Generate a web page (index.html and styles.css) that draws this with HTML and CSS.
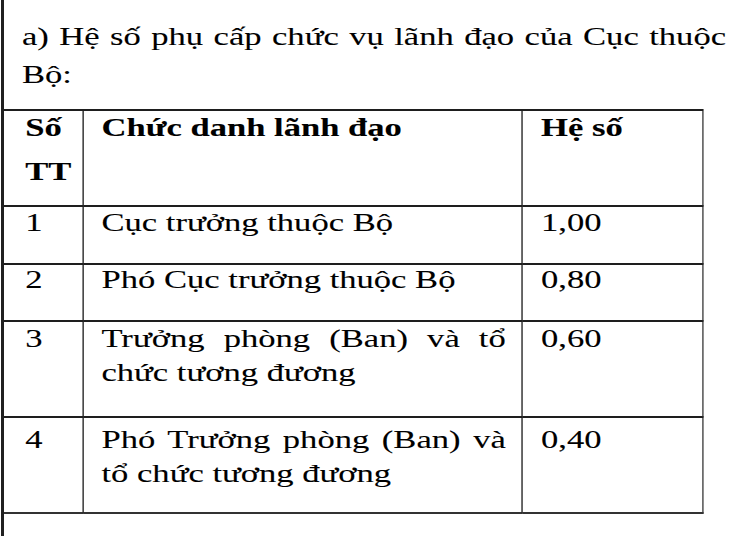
FILE: index.html
```html
<!DOCTYPE html>
<html lang="vi">
<head>
<meta charset="utf-8">
<link rel="stylesheet" href="styles.css">
</head>
<body>
<div class="frame">
  <div class="sheet">
    <p class="intro">a) Hệ số phụ cấp chức vụ lãnh đạo của Cục thuộc Bộ:</p>
    <div class="grid">
      <div class="cell head c1"><span class="ln">Số</span><span class="ln tt">TT</span></div>
      <div class="cell head c2">Chức danh lãnh đạo</div>
      <div class="cell head c3">Hệ số</div>

      <div class="cell r1 c1">1</div>
      <div class="cell r1 c2">Cục trưởng thuộc Bộ</div>
      <div class="cell r1 c3">1,00</div>

      <div class="cell r2 c1">2</div>
      <div class="cell r2 c2">Phó Cục trưởng thuộc Bộ</div>
      <div class="cell r2 c3">0,80</div>

      <div class="cell r3 c1">3</div>
      <div class="cell r3 c2">Trưởng phòng (Ban) và tổ chức tương đương</div>
      <div class="cell r3 c3">0,60</div>

      <div class="cell r4 c1">4</div>
      <div class="cell r4 c2">Phó Trưởng phòng (Ban) và tổ chức tương đương</div>
      <div class="cell r4 c3">0,40</div>
    </div>
  </div>
</div>
</body>
</html>
```
FILE: styles.css
```css
html, body {
  margin: 0;
  padding: 0;
  background: #fff;
}
.frame {
  margin-left: 1px;
  border-left: 3px solid #202020;
  height: 536px;
  box-sizing: border-box;
  overflow: hidden;
}
.sheet {
  width: 545.9px;
  transform: scaleX(1.33);
  transform-origin: 0 0;
  font-family: "Liberation Serif", "Times New Roman", serif;
  font-size: 26px;
  color: #000;
  -webkit-text-stroke: 0.1px #000;
}
.intro {
  margin: 0;
  padding: 18px 3px 0 13.5px;
  line-height: 38px;
  text-align: justify;
}
.grid {
  margin-top: 15px;
  width: 526.3px;
  display: grid;
  grid-template-columns: 60.1px 329.7px 136.5px;
  grid-template-rows: 96px 58px 57px 96px 96px;
  border-top: 2px solid #1e1e1e;
}
.cell {
  box-sizing: border-box;
  border-right: 1.5px solid #1e1e1e;
  border-bottom: 2px solid #1e1e1e;
  line-height: 34px;
  padding-top: 0;
}
.cell.c3 {
  border-right-color: #3a3a3a;
  border-right-width: 1.8px;
}
.cell.r4 {
  border-bottom-color: #333;
  padding-top: 4.5px;
}
.c1 { padding-left: 16px; }
.c2 { padding-left: 13.2px; padding-right: 11.5px; text-align: justify; }
.c3 { padding-left: 14px; }
.head { font-weight: bold; }
.ln { display: block; }
.tt { margin-top: 10px; }
.r1 { line-height: 32px; }
.r2 { line-height: 30px; }
```
